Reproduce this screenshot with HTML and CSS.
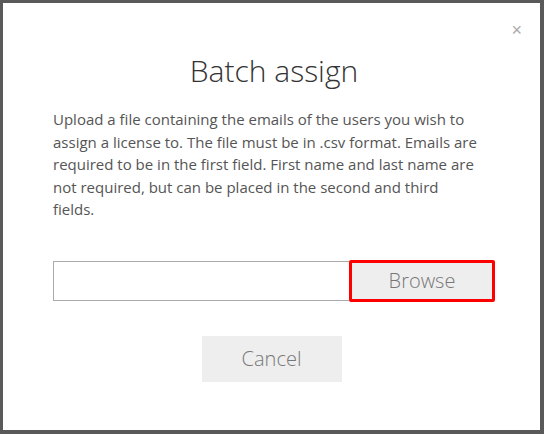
FILE: index.html
```html
<!DOCTYPE html>
<html lang="en">
<head>
    <meta charset="UTF-8">
    <meta name="viewport" content="width=device-width, initial-scale=1.0">
    <title>Batch assign</title>
    <link rel="stylesheet" href="styles.css">
</head>
<body>
    <div class="modal">
        <button class="close">&times;</button>
        <h1>Batch assign</h1>
        <p class="info">Upload a file containing the emails of the users you wish to assign a license to. The file must be in .csv format. Emails are required to be in the first field. First name and last name are not required, but can be placed in the second and third fields.</p>
        <div class="upload">
            <input type="text" class="file-name">
            <button class="browse">Browse</button>
        </div>
        <div class="actions">
            <button class="cancel">Cancel</button>
        </div>
    </div>
</body>
</html>
```

FILE: styles.css
```css
html, body {
    height: 100%;
}

body {
    margin: 0;
    background: #595959;
    font-family: "Open Sans", Arial, sans-serif;
    color: #555;
    box-sizing: border-box;
    padding: 3px 4px 4px 3px;
}

.modal {
    position: relative;
    background: white;
    height: 100%;
    box-sizing: border-box;
    padding: 48px 45px 0 50px;
}

.close {
    position: absolute;
    top: 17px;
    right: 18px;
    border: none;
    background: none;
    color: #aaa;
    font-size: 18px;
    font-family: Arial, sans-serif;
    padding: 0;
    cursor: pointer;
}

h1 {
    margin: 0;
    text-align: center;
    font-weight: 300;
    font-size: 30px;
    line-height: 40px;
    color: #333;
}

.info {
    margin: 17px 16px 0 0;
    font-size: 15px;
    line-height: 22.5px;
    color: #555;
}

.upload {
    display: flex;
    margin-top: 39px;
    align-items: center;
}

.file-name {
    flex: 1;
    height: 40px;
    box-sizing: border-box;
    border: 1px solid #aaa;
    border-right: none;
    margin: 0;
    font: inherit;
}

.browse {
    width: 146px;
    height: 42px;
    box-sizing: border-box;
    border: 3px solid red;
    border-radius: 2px;
    background: #eee;
    color: #777;
    font-family: inherit;
    font-weight: 300;
    font-size: 20px;
    cursor: pointer;
}

.actions {
    display: flex;
    justify-content: center;
    margin-top: 34px;
    padding-right: 5px;
}

.cancel {
    width: 140px;
    height: 46px;
    border: none;
    background: #eee;
    color: #777;
    font-family: inherit;
    font-weight: 300;
    font-size: 20px;
    cursor: pointer;
}
```
